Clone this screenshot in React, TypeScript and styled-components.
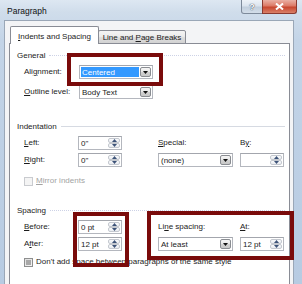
import React from 'react';
import styled, { createGlobalStyle } from 'styled-components';

const GlobalStyle = createGlobalStyle`
  html, body {
    margin: 0;
    padding: 0;
    background: #ffffff;
  }
  body {
    width: 302px;
    height: 284px;
    overflow: hidden;
    font-family: 'Liberation Sans', Arial, sans-serif;
    font-size: 8px;
    color: #1b1b1b;
  }
`;

const Window = styled.div`
  position: relative;
  width: 302px;
  height: 284px;
  overflow: hidden;
  display: flex;
  flex-direction: column;
  background: linear-gradient(180deg, #dde7f2 0px, #d0ddeb 12px, #c3d4e7 40px, #b7cbe2 100%);
`;

const TitleBar = styled.div`
  display: flex;
  align-items: flex-start;
  height: 20px;
  flex-shrink: 0;
`;

const Title = styled.div`
  padding: 6px 0 0 7px;
  font-size: 8.5px;
  line-height: 10px;
  color: #101010;
`;

const Caption = styled.div`
  display: flex;
  margin-left: auto;
  margin-right: 5px;
`;

const CaptionButton = styled.div<{ $close?: boolean }>`
  display: flex;
  align-items: center;
  justify-content: center;
  width: ${({ $close }) => ($close ? 35 : 22)}px;
  height: 14px;
  box-sizing: border-box;
  border: 1px solid ${({ $close }) => ($close ? '#8a3a30' : '#7d8a9a')};
  border-top: none;
  border-radius: ${({ $close }) => ($close ? '0 0 3px 0' : '0 0 0 3px')};
  margin-left: ${({ $close }) => ($close ? '-1px' : '0')};
  background: ${({ $close }) =>
    $close
      ? 'linear-gradient(180deg, #eab0a4 0%, #dc7a66 45%, #c8472f 55%, #d98068 100%)'
      : 'linear-gradient(180deg, #eef3f8 0%, #dbe4ee 45%, #c2cfdd 55%, #d3dee9 100%)'};
`;

const HelpMark = styled.span`
  color: #ffffff;
  font-size: 9px;
  font-weight: bold;
  line-height: 10px;
  text-shadow: 0 0 1px #3b4a5c, 0 0 1px #3b4a5c;
`;

const Client = styled.div`
  flex: 1;
  display: flex;
  flex-direction: column;
  margin: 0 8px 0 4px;
  padding: 6px 3px 0 4px;
  border: 1px solid #9aa7b7;
  border-bottom: none;
  background: #f3f4f6;
`;

const TabStrip = styled.div`
  display: flex;
  align-items: flex-end;
  height: 17px;
  padding-left: 1px;
  position: relative;
  z-index: 1;
  margin-bottom: -1px;
`;

const Tab = styled.div<{ $active?: boolean; $w: number }>`
  display: flex;
  align-items: center;
  justify-content: center;
  box-sizing: border-box;
  width: ${({ $w }) => $w}px;
  height: ${({ $active }) => ($active ? 18 : 14)}px;
  padding-top: ${({ $active }) => ($active ? 2 : 0)}px;
  border: 1px solid #898c95;
  border-bottom: ${({ $active }) => ($active ? 'none' : '1px solid #898c95')};
  border-radius: 2px 2px 0 0;
  margin-left: ${({ $active }) => ($active ? 0 : -1)}px;
  background: ${({ $active }) =>
    $active ? '#ffffff' : 'linear-gradient(180deg, #f4f4f4 0%, #ececec 45%, #dedede 55%, #d2d2d2 100%)'};
  white-space: nowrap;
`;

const Panel = styled.div`
  flex: 1;
  display: flex;
  flex-direction: column;
  background: #ffffff;
  border: 1px solid #898c95;
  border-bottom: none;
  padding-left: 7px;
`;

const Heading = styled.div<{ $top: number }>`
  display: flex;
  align-items: center;
  gap: 4px;
  height: 12px;
  margin: ${({ $top }) => $top}px 4px 0 0;
  white-space: nowrap;
`;

const Rule = styled.div<{ $dotted?: boolean }>`
  flex: 1;
  height: 0;
  border-top: 1px ${({ $dotted }) => ($dotted ? 'dotted #cdd2e6' : 'solid #d6dae2')};
`;

const FieldRow = styled.div<{ $top: number }>`
  display: flex;
  align-items: center;
  height: 14px;
  margin-top: ${({ $top }) => $top}px;
  padding-left: 7px;
`;

const Label = styled.span<{ $w?: number; $disabled?: boolean }>`
  display: block;
  width: ${({ $w }) => ($w ? `${$w}px` : 'auto')};
  line-height: 14px;
  white-space: nowrap;
  color: ${({ $disabled }) => ($disabled ? '#a3a3a3' : '#1b1b1b')};
`;

const U = styled.span`
  text-decoration: underline;
`;

const Grid = styled.div<{ $top: number }>`
  display: grid;
  grid-template-columns: 54px 44px 36px 75px 7px 44px;
  grid-template-rows: 14px 14px;
  row-gap: 3px;
  margin-top: ${({ $top }) => $top}px;
  padding-left: 7px;
`;

const Field = styled.div<{ $w: number }>`
  display: flex;
  align-items: stretch;
  box-sizing: border-box;
  width: ${({ $w }) => $w}px;
  height: 14px;
  border: 1px solid #b4b7be;
  border-top-color: #a3a6ad;
  background: #ffffff;
  padding: 1px;
`;

const FieldText = styled.span<{ $selected?: boolean }>`
  flex: 1;
  display: flex;
  align-items: center;
  padding-left: 1px;
  white-space: nowrap;
  overflow: hidden;
  background: ${({ $selected }) => ($selected ? '#3399ff' : 'transparent')};
  color: ${({ $selected }) => ($selected ? '#ffffff' : '#1b1b1b')};
`;

const DropButton = styled.span`
  display: flex;
  align-items: center;
  justify-content: center;
  width: 11px;
  margin-left: 1px;
  box-sizing: border-box;
  border: 1px solid #8a8d92;
  border-radius: 2px;
  background: linear-gradient(180deg, #f6f6f6 0%, #e6e6e6 50%, #d2d2d2 51%, #c8c8c8 100%);
`;

const SpinButtons = styled.span`
  display: flex;
  flex-direction: column;
  width: 12px;
`;

const SpinHalf = styled.span`
  flex: 1;
  display: flex;
  align-items: center;
  justify-content: center;
  box-sizing: border-box;
  border: 1px solid #c4c8cf;
  border-radius: 2px;
  background: linear-gradient(180deg, #fafbfc 0%, #e9ecf0 100%);
`;

const CheckRow = styled.div<{ $top: number }>`
  display: flex;
  align-items: center;
  gap: 3px;
  height: 10px;
  margin-top: ${({ $top }) => $top}px;
  padding-left: 7px;
`;

const CheckBox = styled.span<{ $disabled?: boolean }>`
  display: flex;
  align-items: center;
  justify-content: center;
  box-sizing: border-box;
  width: 9px;
  height: 9px;
  border: 1px solid ${({ $disabled }) => ($disabled ? '#c9cbcf' : '#8e8f8f')};
  background: ${({ $disabled }) => ($disabled ? '#f4f4f4' : 'linear-gradient(135deg, #dedede, #f6f6f6)')};
`;

const Indeterminate = styled.span`
  width: 5px;
  height: 5px;
  background: #a8a8a8;
`;

const Empty = styled.span``;

const Highlight = styled.div<{ $l: number; $t: number; $w: number; $h: number }>`
  position: absolute;
  left: ${({ $l }) => $l}px;
  top: ${({ $t }) => $t}px;
  width: ${({ $w }) => $w}px;
  height: ${({ $h }) => $h}px;
  box-sizing: border-box;
  border: 4px solid #7a0b0b;
  pointer-events: none;
`;

const DownArrow = () => (
  <svg width="5" height="3" viewBox="0 0 5 3">
    <path d="M0 0h5L2.5 3z" fill="#111" />
  </svg>
);

const SpinArrow = ({ up }: { up?: boolean }) => (
  <svg width="5" height="3" viewBox="0 0 5 3">
    <path d={up ? 'M0 3h5L2.5 0z' : 'M0 0h5L2.5 3z'} fill="#3d5378" />
  </svg>
);

const Select = ({ w, value, selected }: { w: number; value: string; selected?: boolean }) => (
  <Field $w={w}>
    <FieldText $selected={selected}>{value}</FieldText>
    <DropButton>
      <DownArrow />
    </DropButton>
  </Field>
);

const Spinner = ({ value }: { value: string }) => (
  <Field $w={44}>
    <FieldText>{value}</FieldText>
    <SpinButtons>
      <SpinHalf>
        <SpinArrow up />
      </SpinHalf>
      <SpinHalf>
        <SpinArrow />
      </SpinHalf>
    </SpinButtons>
  </Field>
);

const App = () => (
  <>
    <GlobalStyle />
    <Window>
      <TitleBar>
        <Title>Paragraph</Title>
        <Caption>
          <CaptionButton>
            <HelpMark>?</HelpMark>
          </CaptionButton>
          <CaptionButton $close>
            <svg width="9" height="7" viewBox="0 0 9 7">
              <path d="M1 0.5l7 6M8 0.5l-7 6" stroke="#ffffff" strokeWidth="2" />
            </svg>
          </CaptionButton>
        </Caption>
      </TitleBar>

      <Client>
        <TabStrip>
          <Tab $active $w={89}>
            <span>
              <U>I</U>ndents and Spacing
            </span>
          </Tab>
          <Tab $w={88}>
            <span>
              Line and <U>P</U>age Breaks
            </span>
          </Tab>
        </TabStrip>

        <Panel>
          <Heading $top={5}>
            <span>General</span>
            <Rule $dotted />
          </Heading>
          <FieldRow $top={4}>
            <Label $w={55}>
              Ali<U>g</U>nment:
            </Label>
            <Select w={74} value="Centered" selected />
          </FieldRow>
          <FieldRow $top={6}>
            <Label $w={55}>
              <U>O</U>utline level:
            </Label>
            <Select w={74} value="Body Text" />
          </FieldRow>

          <Heading $top={21}>
            <span>Indentation</span>
            <Rule />
          </Heading>
          <Grid $top={4}>
            <Label>
              <U>L</U>eft:
            </Label>
            <Spinner value={'0"'} />
            <Empty />
            <Label>
              <U>S</U>pecial:
            </Label>
            <Empty />
            <Label>
              B<U>y</U>:
            </Label>
            <Label>
              <U>R</U>ight:
            </Label>
            <Spinner value={'0"'} />
            <Empty />
            <Select w={75} value="(none)" />
            <Empty />
            <Spinner value="" />
          </Grid>
          <CheckRow $top={9}>
            <CheckBox $disabled />
            <Label $disabled>
              <U>M</U>irror indents
            </Label>
          </CheckRow>

          <Heading $top={18}>
            <span>Spacing</span>
            <Rule $dotted />
          </Heading>
          <Grid $top={4}>
            <Label>
              <U>B</U>efore:
            </Label>
            <Spinner value="0 pt" />
            <Empty />
            <Label>
              Li<U>n</U>e spacing:
            </Label>
            <Empty />
            <Label>
              <U>A</U>t:
            </Label>
            <Label>
              A<U>f</U>ter:
            </Label>
            <Spinner value="12 pt" />
            <Empty />
            <Select w={75} value="At least" />
            <Empty />
            <Spinner value="12 pt" />
          </Grid>
          <CheckRow $top={6}>
            <CheckBox>
              <Indeterminate />
            </CheckBox>
            <Label>
              Don't add spa<U>c</U>e between paragraphs of the same style
            </Label>
          </CheckRow>
        </Panel>
      </Client>

      <Highlight $l={67} $t={53} $w={96} $h={33} />
      <Highlight $l={73} $t={212} $w={56} $h={55} />
      <Highlight $l={147} $t={211} $w={147} $h={49} />
    </Window>
  </>
);

export default App;
